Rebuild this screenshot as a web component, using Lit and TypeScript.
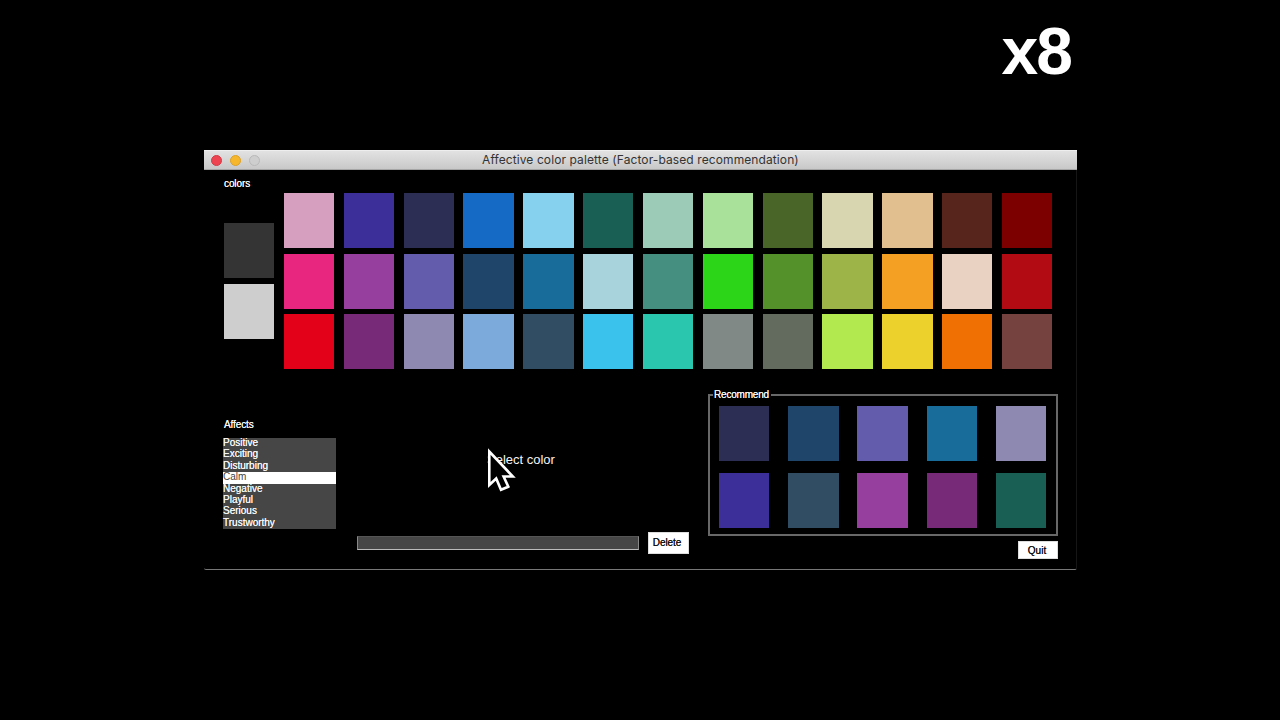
import { LitElement, html, css } from "lit";
import { customElement, property } from "lit/decorators.js";

const PALETTE = [
  "#d69fc0", "#3c2f9a", "#2d2e54", "#146ac4", "#86d1ed", "#195f54", "#9ccbb8", "#a9e09a", "#496628", "#d8d6b1", "#e2bf8e", "#58251c", "#7c0000",
  "#e8257f", "#963f9e", "#635bab", "#20456a", "#186c9a", "#a9d3dc", "#458f80", "#2dd519", "#55912a", "#9db548", "#f4a123", "#ead2c3", "#b30b14",
  "#e30019", "#762a78", "#8d89b1", "#7caada", "#314d64", "#3ac2ec", "#2bc6ae", "#808985", "#636b5f", "#b1e94e", "#ecd02b", "#f07003", "#75423f",
];
const NEUTRALS = ["#343434", "#cecece"];
const AFFECTS = ["Positive", "Exciting", "Disturbing", "Calm", "Negative", "Playful", "Serious", "Trustworthy"];
const RECOMMENDED = [
  "#2d2e54", "#20456a", "#635bab", "#186c9a", "#8d89b1",
  "#3c2f9a", "#314d64", "#963f9e", "#762a78", "#195f54",
];

@customElement("color-swatch")
class ColorSwatch extends LitElement {
  @property() color = "#000";
  static styles = css`
    :host { display: block; width: 50.4px; height: 55.2px; }
    .fill { width: 100%; height: 100%; }
  `;
  render() {
    return html`<div class="fill" style="background:${this.color}"></div>`;
  }
}

@customElement("app-root")
class AppRoot extends LitElement {
  static styles = css`
    :host {
      display: block; position: relative; width: 1280px; height: 720px; overflow: hidden;
      background: #000; color: #f4f4f4;
      font: 10px/12px "Liberation Sans", Arial, sans-serif;
    }
    * { box-sizing: border-box; }
    .stage { height: 150px; padding: 13px 209px 0 0; text-align: right; }
    .speed { font: 700 66px/76px "Liberation Sans", Arial, sans-serif; letter-spacing: -2px; color: #fff; }
    .window { width: 873px; height: 420px; margin-left: 204px; display: flex; flex-direction: column;
      border: 1px solid #161616; border-top: 0; border-left: 0; border-bottom: 1px solid #777; border-radius: 0 0 2px 2px; }
    .titlebar { height: 20px; margin-right: -1px; flex: none; display: grid; grid-template-columns: 271px 1fr; align-items: center;
      padding-left: 7px; background: linear-gradient(#e2e2e2, #c8c8c8); border-bottom: 1px solid #a5a5a5; border-top: 1px solid #eee; }
    .lights { display: flex; gap: 8px; }
    .light { width: 11px; height: 11px; border-radius: 50%; border: 1px solid #b9b9b9; background: #cecece; }
    .close { background: #ee4350; border-color: #d63842; }
    .minimize { background: #f6b72d; border-color: #dca125; }
    .title { font: 12px/16px Inter, sans-serif; letter-spacing: .1px; color: #333; white-space: nowrap; }
    .top { display: flex; height: 216px; padding: 8px 0 0 20px; }
    .neutrals { width: 60px; display: flex; flex-direction: column; gap: 5.6px; }
    .label { height: 12px; text-shadow: 0 0 .5px #fff; white-space: nowrap; }
    .neutrals .label { margin-bottom: 27.4px; letter-spacing: -.1px; }
    .palette { display: grid; grid-template-columns: repeat(13, 50.4px); grid-auto-rows: 55.2px; gap: 5.4px 9.43px; padding-top: 15px; align-content: start; }
    .bottom { display: flex; padding-left: 19px; height: 183px; }
    .affects { width: 133.5px; padding-top: 33px; }
    .affects .label { padding-left: 1px; height: 19px; letter-spacing: -.1px; }
    .list { width: 113px; height: 91px; background: #464646; display: grid; grid-template-rows: repeat(8, 11.4px); }
    .item { line-height: 10.6px; text-shadow: 0 0 .5px #fff; }
    .item.selected { background: #fff; color: #444; text-shadow: none; }
    .editor { width: 351.5px; padding-top: 67px; }
    .prompt { font-size: 13px; line-height: 14px; height: 79px; padding-left: 130.5px; }
    .entry { display: flex; gap: 9px; }
    .field { width: 282px; height: 14px; margin-top: 4px; background: #464646; border: 1px solid #888; border-top-color: #555; border-bottom-color: #bbb; }
    .button { background: #fff; color: #111; text-align: center; border: 1px solid #ddd; text-shadow: 0 0 .4px #222; }
    .delete { width: 41px; height: 22px; line-height: 20px; padding-right: 2px; letter-spacing: -.1px; }
    .side { width: 350px; padding-top: 3px; }
    .frame { height: 147px; margin: 0; border: 2px solid #686868; padding: 5px 0 0 9px; min-width: 0; }
    .frame legend { margin-left: -6px; padding: 0 2px 0 1px; height: 12px; letter-spacing: -.2px; text-shadow: 0 0 .5px #fff; }
    .picks { display: grid; grid-template-columns: repeat(5, 50.4px); grid-auto-rows: 55.2px; gap: 11.4px 18.85px; }
    .quit { width: 40px; height: 18px; line-height: 18px; margin: 5px 0 0 auto; padding-right: 2px; }
    .cursor { position: absolute; left: 486px; top: 445px; }
  `;

  render() {
    return html`
      <div class="stage"><span class="speed">x8</span></div>
      <div class="window">
        <div class="titlebar">
          <div class="lights">
            <div class="light close"></div><div class="light minimize"></div><div class="light"></div>
          </div>
          <div class="title">Affective color palette (Factor-based recommendation)</div>
        </div>
        <div class="top">
          <div class="neutrals">
            <div class="label">colors</div>
            ${NEUTRALS.map((c) => html`<color-swatch .color=${c}></color-swatch>`)}
          </div>
          <div class="palette">${PALETTE.map((c) => html`<color-swatch .color=${c}></color-swatch>`)}</div>
        </div>
        <div class="bottom">
          <div class="affects">
            <div class="label">Affects</div>
            <div class="list">
              ${AFFECTS.map((a) => html`<div class="item ${a === "Calm" ? "selected" : ""}">${a}</div>`)}
            </div>
          </div>
          <div class="editor">
            <div class="prompt">Select color</div>
            <div class="entry"><div class="field"></div><div class="button delete">Delete</div></div>
          </div>
          <div class="side">
            <fieldset class="frame">
              <legend>Recommend</legend>
              <div class="picks">${RECOMMENDED.map((c) => html`<color-swatch .color=${c}></color-swatch>`)}</div>
            </fieldset>
            <div class="button quit">Quit</div>
          </div>
        </div>
      </div>
      <svg class="cursor" width="32" height="50" viewBox="0 0 32 50">
        <path d="M3.3 6.5V40L10.2 33.5L15 44.8L22.3 41.7L17.6 31.5H26.8Z" fill="#000" stroke="#fff" stroke-width="2.6" />
      </svg>
    `;
  }
}
